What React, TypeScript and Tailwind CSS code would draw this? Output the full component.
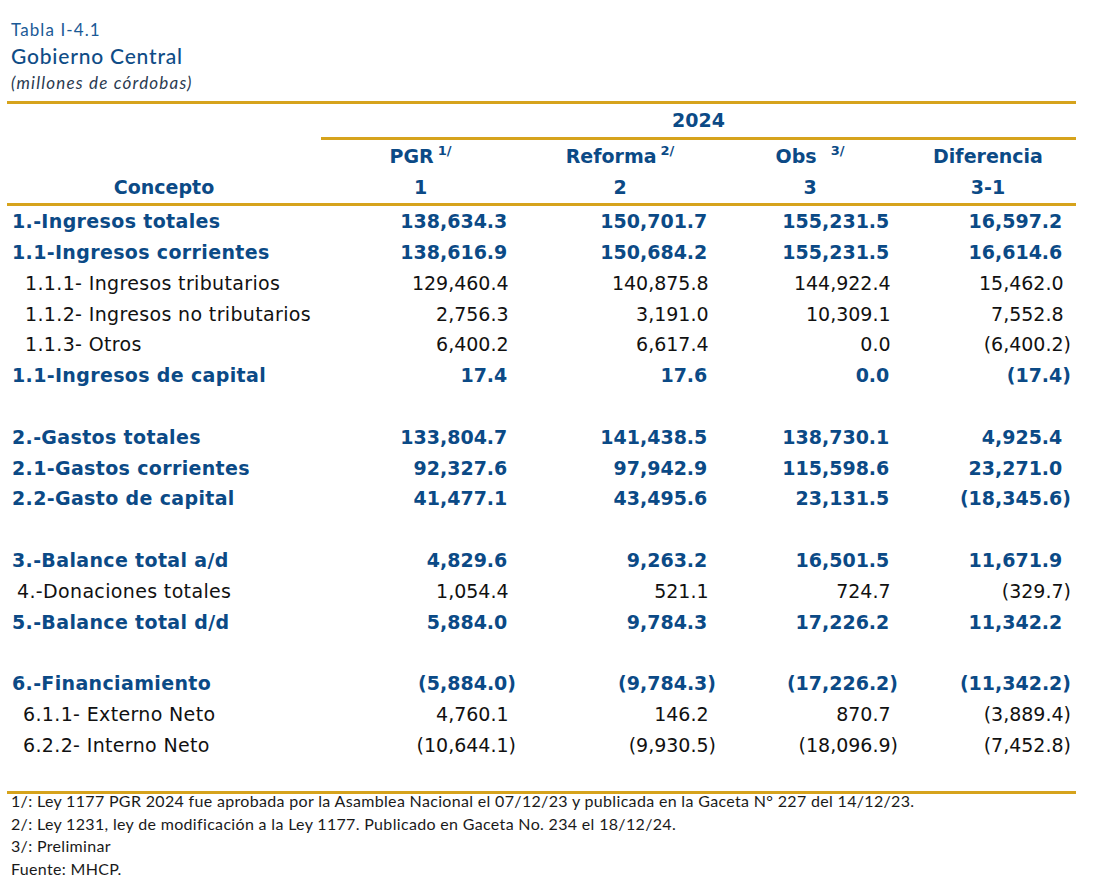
import React from "react";

type Row = {
  label?: string;
  vals?: string[];
  bold?: boolean;
  indent?: string;
};

const rows: Row[] = [
  { label: "1.-Ingresos totales", vals: ["138,634.3", "150,701.7", "155,231.5", "16,597.2"], bold: true },
  { label: "1.1-Ingresos corrientes", vals: ["138,616.9", "150,684.2", "155,231.5", "16,614.6"], bold: true },
  { label: "1.1.1- Ingresos tributarios", vals: ["129,460.4", "140,875.8", "144,922.4", "15,462.0"], indent: "pl-[18px]" },
  { label: "1.1.2- Ingresos no tributarios", vals: ["2,756.3", "3,191.0", "10,309.1", "7,552.8"], indent: "pl-[18px]" },
  { label: "1.1.3- Otros", vals: ["6,400.2", "6,617.4", "0.0", "(6,400.2)"], indent: "pl-[18px]" },
  { label: "1.1-Ingresos de capital", vals: ["17.4", "17.6", "0.0", "(17.4)"], bold: true },
  {},
  { label: "2.-Gastos totales", vals: ["133,804.7", "141,438.5", "138,730.1", "4,925.4"], bold: true },
  { label: "2.1-Gastos corrientes", vals: ["92,327.6", "97,942.9", "115,598.6", "23,271.0"], bold: true },
  { label: "2.2-Gasto de capital", vals: ["41,477.1", "43,495.6", "23,131.5", "(18,345.6)"], bold: true },
  {},
  { label: "3.-Balance total a/d", vals: ["4,829.6", "9,263.2", "16,501.5", "11,671.9"], bold: true },
  { label: "4.-Donaciones totales", vals: ["1,054.4", "521.1", "724.7", "(329.7)"], indent: "pl-[10px]" },
  { label: "5.-Balance total d/d", vals: ["5,884.0", "9,784.3", "17,226.2", "11,342.2"], bold: true },
  {},
  { label: "6.-Financiamiento", vals: ["(5,884.0)", "(9,784.3)", "(17,226.2)", "(11,342.2)"], bold: true },
  { label: "6.1.1- Externo Neto", vals: ["4,760.1", "146.2", "870.7", "(3,889.4)"], indent: "pl-[16px]" },
  { label: "6.2.2- Interno Neto", vals: ["(10,644.1)", "(9,930.5)", "(18,096.9)", "(7,452.8)"], indent: "pl-[16px]" },
  {},
];

const colW = ["w-[199px]", "w-[200px]", "w-[180px]", "w-[176px]"];
const colPad = ["pr-[4px]", "pr-[4px]", "pr-[2px]", "pr-[5px]"];

function Num({ v }: { v: string }) {
  const neg = v.startsWith("(");
  return (
    <span>
      {v}
      {!neg && <span className="invisible">)</span>}
    </span>
  );
}

export default function App() {
  const blue = "text-[#0b4a86]";
  return (
    <div className="w-[1116px] h-[880px] bg-white overflow-hidden relative">
      <div className="pl-[11px] pt-[19px]">
        <div className="font-['Lato',sans-serif] text-[#1b5a96] text-[17px] leading-[22px] tracking-[1.1px]">Tabla I-4.1</div>
        <div className="font-['Lato',sans-serif] text-[#0f4c86] text-[21px] leading-[28px] font-medium tracking-[0.8px] mt-[1px]">Gobierno Central</div>
        <div className="font-['Lato',sans-serif] text-[#2a3a50] text-[17px] leading-[22px] italic tracking-[1.2px] mt-[2px]">(millones de córdobas)</div>
      </div>
      <div className="ml-[7px] w-[1069px] mt-[7px] font-['DejaVu_Sans','Verdana',sans-serif]">
        <div className="h-[3px] bg-[#d6a31c]" />
        <div className="flex">
          <div className="w-[314px] shrink-0" />
          <div className="flex-1">
            <div className={`h-[33px] flex items-center justify-center font-bold text-[19px] ${blue}`}>2024</div>
            <div className="h-[3px] bg-[#d6a31c]" />
          </div>
        </div>
        <div className={`flex font-bold text-[19px] ${blue}`}>
          <div className="w-[314px] shrink-0 flex flex-col">
            <div className="h-[32px]" />
            <div className="h-[31px] flex items-center justify-center">Concepto</div>
          </div>
          {[
            ["PGR", "1/", "1"],
            ["Reforma", "2/", "2"],
            ["Obs", "3/", "3"],
            ["Diferencia", "", "3-1"],
          ].map(([h, sup, n], i) => (
            <div key={i} className={`${colW[i]} shrink-0 flex flex-col`}>
              <div className="h-[32px] flex items-center justify-center">
                <span className="whitespace-nowrap">
                  {h}
                  {sup && (
                    <span
                      className={`relative top-[-8px] text-[13px] font-bold ${i === 2 ? "ml-[14px]" : "ml-[4px]"}`}
                    >
                      {sup}
                    </span>
                  )}
                </span>
              </div>
              <div className="h-[31px] flex items-center justify-center">{n}</div>
            </div>
          ))}
        </div>
        <div className="h-[3px] bg-[#d6a31c]" />
        <div>
          {rows.map((r, idx) => (
            <div
              key={idx}
              className={`flex h-[30.8px] items-center text-[19px] ${r.bold ? `font-bold ${blue}` : "text-[#111]"}`}
            >
              <div className={`w-[314px] shrink-0 whitespace-nowrap tracking-[0.35px] ${r.indent ?? "pl-[5px]"}`}>{r.label}</div>
              {r.vals?.map((v, i) => (
                <div key={i} className={`${colW[i]} ${colPad[i]} shrink-0 text-right whitespace-nowrap`}>
                  <Num v={v} />
                </div>
              ))}
            </div>
          ))}
        </div>
        <div className="h-[3px] bg-[#d6a31c]" />
      </div>
      <div className="pl-[11px] mt-[-4px] font-['Lato',sans-serif] text-[16px] leading-[22.6px] text-[#1a1a1a] tracking-[0.33px]">
        <div>1/: Ley 1177 PGR 2024 fue aprobada por la Asamblea Nacional el 07/12/23 y publicada en la Gaceta N° 227 del 14/12/23.</div>
        <div>2/: Ley 1231, ley de modificación a la Ley 1177. Publicado en Gaceta No. 234 el 18/12/24.</div>
        <div>3/: Preliminar</div>
        <div>Fuente: MHCP.</div>
      </div>
    </div>
  );
}
